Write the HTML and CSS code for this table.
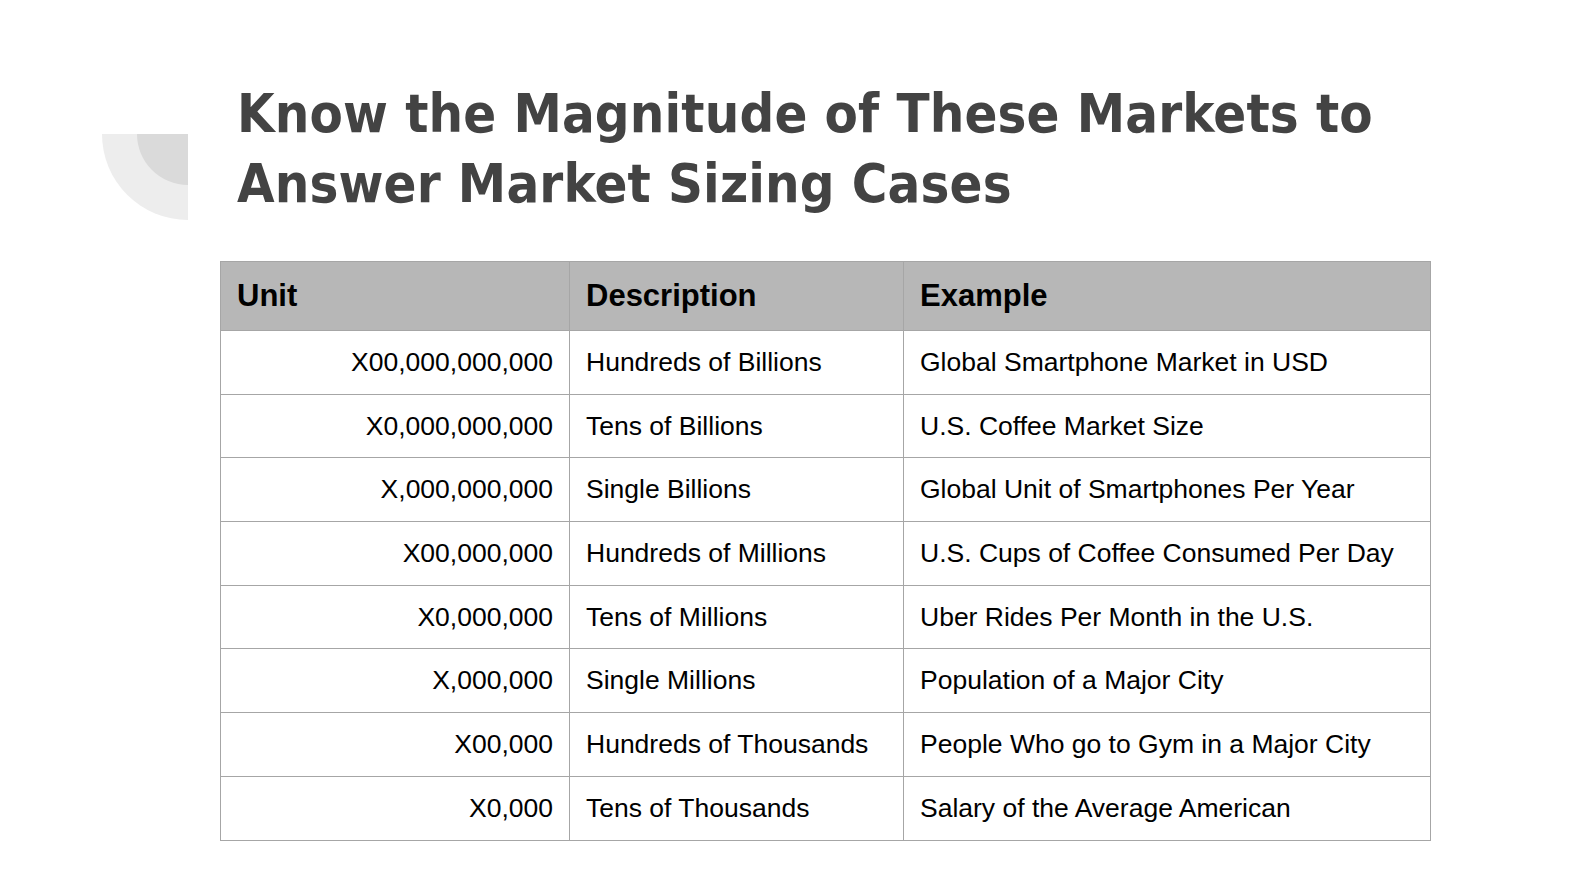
FILE: index.html
```html
<!DOCTYPE html>
<html>
<head>
<meta charset="utf-8">
<link rel="stylesheet" href="styles.css">
</head>
<body>
<div class="slide">
  <header class="head">
    <svg class="deco" width="86" height="86" viewBox="0 0 86 86">
      <path d="M0 0 H86 V86 A86 86 0 0 1 0 0 Z" fill="#ededed"/>
      <path d="M35 0 H86 V51 A51 51 0 0 1 35 0 Z" fill="#dadada"/>
    </svg>
    <h1 class="title">Know the Magnitude of These Markets to<br>Answer Market Sizing Cases</h1>
  </header>
  <table class="grid">
    <colgroup>
      <col class="c1"><col class="c2"><col class="c3">
    </colgroup>
    <thead>
      <tr><th>Unit</th><th>Description</th><th>Example</th></tr>
    </thead>
    <tbody>
      <tr><td class="num">X00,000,000,000</td><td>Hundreds of Billions</td><td>Global Smartphone Market in USD</td></tr>
      <tr><td class="num">X0,000,000,000</td><td>Tens of Billions</td><td>U.S. Coffee Market Size</td></tr>
      <tr><td class="num">X,000,000,000</td><td>Single Billions</td><td>Global Unit of Smartphones Per Year</td></tr>
      <tr><td class="num">X00,000,000</td><td>Hundreds of Millions</td><td>U.S. Cups of Coffee Consumed Per Day</td></tr>
      <tr><td class="num">X0,000,000</td><td>Tens of Millions</td><td>Uber Rides Per Month in the U.S.</td></tr>
      <tr><td class="num">X,000,000</td><td>Single Millions</td><td>Population of a Major City</td></tr>
      <tr><td class="num">X00,000</td><td>Hundreds of Thousands</td><td>People Who go to Gym in a Major City</td></tr>
      <tr><td class="num">X0,000</td><td>Tens of Thousands</td><td>Salary of the Average American</td></tr>
    </tbody>
  </table>
</div>
</body>
</html>
```

FILE: styles.css
```css
html, body {
  margin: 0;
  padding: 0;
  background: #ffffff;
}
.slide {
  width: 1586px;
  height: 888px;
  display: flex;
  flex-direction: column;
  box-sizing: border-box;
  padding-top: 79px;
}
.head {
  display: flex;
  align-items: flex-start;
  padding-left: 102px;
  gap: 49px;
}
.deco {
  flex: none;
  margin-top: 55px;
  display: block;
}
.title {
  margin: 0;
  font-family: "DejaVu Sans Condensed", "DejaVu Sans", sans-serif;
  font-stretch: condensed;
  font-weight: bold;
  font-size: 54px;
  line-height: 70px;
  color: #434343;
  letter-spacing: 0.15px;
}
.grid {
  margin-top: 41px;
  margin-left: 220px;
  border-collapse: collapse;
  table-layout: fixed;
  width: 1210px;
  font-family: "Liberation Sans", Arial, sans-serif;
  color: #000;
}
.c1 { width: 349px; }
.c2 { width: 334px; }
.c3 { width: 527px; }
.grid th, .grid td {
  border: 1px solid #a6a6a6;
  padding: 0 16px;
  vertical-align: middle;
  white-space: nowrap;
}
.grid th {
  background: #b7b7b7;
  height: 68px;
  font-size: 31px;
  font-weight: bold;
  text-align: left;
}
.grid td {
  height: 62.7px;
  font-size: 26.5px;
  text-align: left;
}
.grid td.num {
  text-align: right;
}
```
